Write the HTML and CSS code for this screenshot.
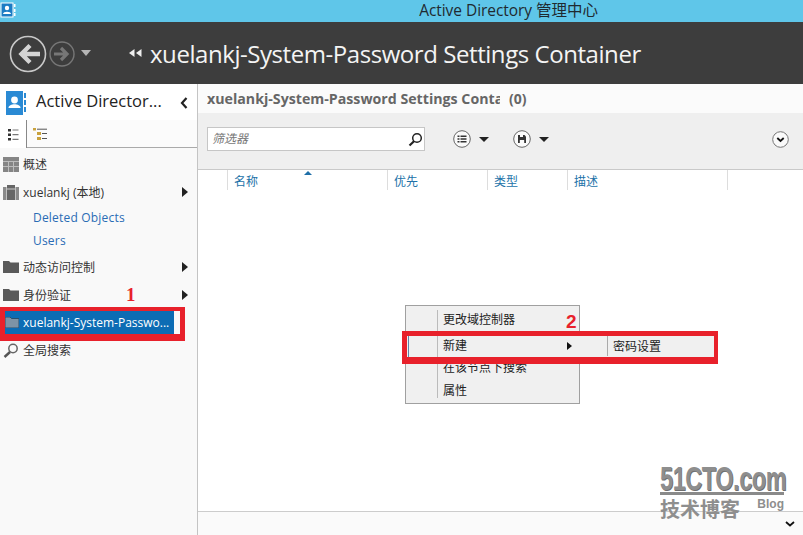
FILE: index.html
```html
<!DOCTYPE html>
<html lang="zh">
<head>
<meta charset="utf-8">
<title>Active Directory 管理中心</title>
<link rel="stylesheet" href="styles.css">
</head>
<body>
<div class="app">
  <div class="titlebar">
    <svg class="app-icon" width="16" height="16" viewBox="0 0 16 16"><rect x="1" y="1" width="12" height="14" fill="#1b7cc4" stroke="#fff"/><rect x="14" y="2" width="1.5" height="3" fill="#fff"/><rect x="14" y="7" width="1.5" height="3" fill="#fff"/><rect x="14" y="11" width="1.5" height="3" fill="#fff"/><circle cx="7" cy="6" r="2.2" fill="#fff"/><path d="M3 12c0-3 8-3 8 0z" fill="#fff"/></svg>
    <span class="title-text">Active Directory 管理中心</span>
  </div>
  <header class="navbar">
    <svg class="nav-back" width="38" height="38" viewBox="0 0 38 38"><circle cx="19" cy="19" r="17.500" fill="none" stroke="#c8c8c8" stroke-width="1.600"/><path d="M31 19H15M21 10.500L12.500 19l8.500 8.500" fill="none" stroke="#d4d4d4" stroke-width="4.400"/></svg>
    <svg class="nav-forward" width="26" height="26" viewBox="0 0 26 26"><circle cx="13" cy="13" r="12" fill="none" stroke="#777" stroke-width="1.400"/><path d="M5 13h12M12 7l6 6-6 6" fill="none" stroke="#777" stroke-width="3.200"/></svg>
    <span class="nav-caret"></span>
    <svg class="crumb" width="13" height="9" viewBox="0 0 13 9"><path d="M5.500 0v8L0 4zM12.500 0v8L7 4z" fill="#eee"/></svg>
    <span class="nav-title">xuelankj-System-Password Settings Container</span>
  </header>
  <div class="content">
    <aside class="sidebar">
      <div class="side-head">
        <svg width="20" height="24" viewBox="0 0 20 24"><rect x="0" y="0" width="17" height="24" fill="#2a8ad4"/><rect x="18" y="2" width="2" height="5" fill="#2a8ad4"/><rect x="18" y="9" width="2" height="5" fill="#2a8ad4"/><rect x="18" y="16" width="2" height="5" fill="#2a8ad4"/><circle cx="8.500" cy="9" r="3.400" fill="#fff"/><path d="M2.500 17c0-5 12-5 12 0z" fill="#fff"/></svg>
        <span class="side-title">Active Director...</span>
        <svg class="collapse" width="8" height="12" viewBox="0 0 8 12"><path d="M6.500 1L2 6l4.500 5" fill="none" stroke="#222" stroke-width="2.200"/></svg>
      </div>
      <div class="tabs">
        <div class="tab tab-on">
          <svg width="11" height="12" viewBox="0 0 11 12"><path d="M0 0h3v2.500H0zM0 4.500h3V7H0zM0 9h3v2.500H0z" fill="#333"/><path d="M4.500 1h6M4.500 5.700h6M4.500 10.300h6" stroke="#777" stroke-width="1.200"/></svg>
        </div>
        <div class="tab">
          <svg width="15" height="13" viewBox="0 0 15 13"><path d="M0 0h3v2.500H0zM4 4h4v3H4zM4 9h4v3H4z" fill="#c9a23e"/><path d="M4 1.200h10M9 5.500h5M9 10.500h5" stroke="#555" stroke-width="1"/></svg>
        </div>
      </div>
      <ul class="tree">
        <li class="node n-overview">
          <svg width="16" height="15" viewBox="0 0 16 15"><rect width="16" height="15" fill="#858585"/><path d="M0 4.500h16M5.500 4.500v10.500M10.500 4.500v10.500M0 9.500h16" stroke="#bdbdbd"/></svg>
          <span>概述</span>
        </li>
        <li class="node n-domain">
          <svg width="16" height="15" viewBox="0 0 16 15"><rect x="4" y="0" width="8" height="15" fill="#666"/><rect x="0" y="2" width="3.500" height="13" fill="#8a8a8a"/><rect x="12.500" y="2" width="3.500" height="13" fill="#8a8a8a"/><path d="M4 4h8" stroke="#ccc"/></svg>
          <span>xuelankj (本地)</span>
          <i class="arrow"></i>
        </li>
        <li class="sub s-first">Deleted Objects</li>
        <li class="sub s-second">Users</li>
        <li class="node n-dac">
          <svg width="16" height="12" viewBox="0 0 16 12"><path d="M0 0h6l1.500 1.500H16V12H0z" fill="#5a5a5a"/></svg>
          <span>动态访问控制</span>
          <i class="arrow"></i>
        </li>
        <li class="node n-auth">
          <svg width="16" height="12" viewBox="0 0 16 12"><path d="M0 0h6l1.500 1.500H16V12H0z" fill="#5a5a5a"/></svg>
          <span>身份验证</span>
          <i class="arrow"></i>
        </li>
        <li class="node n-sel">
          <svg width="14" height="11" viewBox="0 0 14 11"><path d="M0 0h5l1.500 1.500H14V11H0z" fill="#7d93a6" stroke="#2a4f6c"/></svg>
          <span class="sel-text">xuelankj-System-Passwo...</span>
        </li>
        <li class="node n-search">
          <svg width="16" height="15" viewBox="0 0 16 15"><circle cx="10" cy="5.500" r="4.200" fill="none" stroke="#666" stroke-width="1.500"/><path d="M7 9L1.500 14" stroke="#555" stroke-width="2.400"/></svg>
          <span>全局搜索</span>
        </li>
      </ul>
    </aside>
    <main class="main">
      <div class="main-head">
        <span class="main-title">xuelankj-System-Password Settings Conta</span>
        <span class="main-count">(0)</span>
      </div>
      <div class="toolbar">
        <div class="filter">
          <span class="filter-text">筛选器</span>
          <svg width="15" height="15" viewBox="0 0 15 15"><circle cx="9" cy="6" r="4.300" fill="none" stroke="#222" stroke-width="1.500"/><path d="M6 9.300L1.500 13.500" stroke="#222" stroke-width="2.200"/></svg>
        </div>
        <div class="tool t-list">
          <svg width="18" height="18" viewBox="0 0 18 18"><circle cx="9" cy="9" r="8.300" fill="#fafafa" stroke="#666"/><path d="M4.500 5.500h2v1.500h-2zM4.500 8.300h2v1.500h-2zM4.500 11h2v1.500h-2z" fill="#333"/><path d="M7.500 6.200h6M7.500 9h6M7.500 11.800h6" stroke="#333" stroke-width="1.400"/></svg>
          <i class="caret"></i>
        </div>
        <div class="tool t-save">
          <svg width="18" height="18" viewBox="0 0 18 18"><circle cx="9" cy="9" r="8.300" fill="#fafafa" stroke="#666"/><path d="M5 5h6.500L13 6.500V13H5z" fill="#333"/><path d="M7 5h3v2H7zM6.800 10h4.400v3H6.800z" fill="#fafafa"/></svg>
          <i class="caret"></i>
        </div>
        <svg class="expand" width="17" height="17" viewBox="0 0 17 17"><circle cx="8.500" cy="8.500" r="7.800" fill="#fafafa" stroke="#777"/><path d="M5.300 7l3.200 3 3.200-3" fill="none" stroke="#111" stroke-width="1.800"/></svg>
      </div>
      <div class="columns">
        <i class="sort"></i>
        <div class="col c0"></div>
        <div class="col c1">名称</div>
        <div class="col c2">优先</div>
        <div class="col c3">类型</div>
        <div class="col c4">描述</div>
      </div>
      <div class="rows"></div>
      <div class="footer">
        <svg width="10" height="6" viewBox="0 0 10 6"><path d="M1 1l4 3.500L9 1" fill="none" stroke="#111" stroke-width="1.800"/></svg>
      </div>
    </main>
  </div>

  <div class="menu">
    <div class="menu-item">更改域控制器</div>
    <div class="menu-item menu-hot">新建<i class="menu-arrow"></i></div>
    <div class="menu-item menu-search">在该节点下搜索</div>
    <div class="menu-item menu-prop">属性</div>
  </div>
  <div class="submenu"><div class="submenu-item">密码设置</div></div>
  <div class="mark mark-1"></div>
  <div class="mark mark-2"></div>
  <span class="num num-1">1</span>
  <span class="num num-2">2</span>
  <div class="watermark">
    <div class="wm-logo">51CTO.com</div>
    <div class="wm-line"></div>
    <div class="wm-bottom"><span class="wm-cn">技术博客</span><span class="wm-blog">Blog</span></div>
  </div>
</div>
</body>
</html>
```
FILE: styles.css
```css
* { box-sizing: border-box; }
html, body { margin: 0; padding: 0; }
body { font-family: "Open Sans", "Noto Sans CJK SC", sans-serif; font-size: 12px; color: #333; background: #fff; }
.app { width: 803px; height: 535px; position: relative; overflow: hidden; display: flex; flex-direction: column; }

.titlebar { height: 22px; background: #5fc6e9; display: flex; align-items: center; justify-content: center; position: relative; flex: none; }
.app-icon { position: absolute; left: 0; top: 2px; }
.title-text { font-size: 15.500px; line-height: 20px; padding-bottom: 2px; color: #1f2a30; margin-left: 214px; white-space: nowrap; letter-spacing: -0.05px; }

.navbar { height: 62px; flex: none; background: #3d3d3d; display: flex; align-items: center; padding-left: 9px; padding-top: 1px; }
.nav-back { flex: none; }
.nav-forward { flex: none; margin-left: 2px; }
.nav-caret { width: 0; height: 0; border-left: 5px solid transparent; border-right: 5px solid transparent; border-top: 6px solid #b5b5b5; margin-left: 6px; margin-bottom: 2px; }
.crumb { flex: none; margin-left: 38px; margin-bottom: 1px; }
.nav-title { font-size: 24px; color: #f4f4f4; margin-left: 8px; white-space: nowrap; letter-spacing: -0.44px; }

.content { flex: 1; display: flex; min-height: 0; }
.sidebar { width: 198px; flex: none; background: #f9f9f9; border-right: 1px solid #c4c4c4; display: flex; flex-direction: column; }
.side-head { height: 36px; background: #fff; display: flex; align-items: center; padding-left: 6px; padding-top: 1px; }
.side-title { font-size: 16.500px; line-height: 22px; padding-bottom: 3px; color: #222; margin-left: 10px; white-space: nowrap; width: 136px; }
.collapse { margin-left: 8px; }
.tabs { display: flex; height: 28px; border-bottom: 1px solid #aaa; background: #fbfbfb; }
.tab { width: 27px; height: 27px; display: flex; align-items: center; justify-content: center; padding-top: 2px; }
.tab-on { height: 28px; border-right: 1px solid #888; background: #fff; }
.tree { list-style: none; margin: 0; padding: 0; flex: 1; }
.node { display: flex; align-items: center; padding-left: 3px; height: 24px; position: relative; font-size: 12px; color: #333; white-space: nowrap; }
.node span { margin-left: 4px; }
.arrow { position: absolute; left: 182px; top: 7px; width: 0; height: 0; border-top: 5px solid transparent; border-bottom: 5px solid transparent; border-left: 6px solid #222; }
.n-overview { margin-top: 4px; }
.n-domain { margin-top: 4px; margin-bottom: 2px; }
.sub { color: #2a6cb5; padding-left: 33px; height: 23px; line-height: 23px; font-size: 12px; letter-spacing: 0.2px; }
.n-dac { margin-top: 3px; }
.n-auth { margin-top: 4px; }
.n-sel { height: 24px; margin-left: 5px; width: 169px; background: #0c6cb4; padding-left: 0; margin-top: 3px; color: #fff; }
.n-sel .sel-text { margin-left: 4px; color: #fff; }
.n-search { margin-top: 4px; }

.main { flex: 1; display: flex; flex-direction: column; min-width: 0; background: #fff; }
.main-head { height: 29px; background: #fbfbfb; display: flex; align-items: center; padding-left: 9px; font-weight: 700; font-size: 14px; color: #666; white-space: nowrap; }
.main-title { width: 293px; overflow: hidden; font-size: 14.200px; }
.main-count { margin-left: 9px; }
.toolbar { height: 57px; flex: none; background: #efefef; border-bottom: 1px solid #c9c9c9; display: flex; align-items: flex-start; padding: 14px 14px 0 9px; }
.filter { width: 218px; height: 24px; background: #fff; border: 1px solid #c6c6c6; display: flex; align-items: center; justify-content: space-between; padding: 0 1px 0 4px; }
.filter-text { font-style: italic; color: #777; font-size: 12px; padding-bottom: 2px; }
.tool { display: flex; align-items: center; height: 24px; }
.t-list { margin-left: 28px; }
.t-save { margin-left: 24px; }
.caret { width: 0; height: 0; border-left: 5px solid transparent; border-right: 5px solid transparent; border-top: 5px solid #222; margin-left: 8px; }
.expand { margin-left: auto; margin-top: 4px; }
.columns { display: flex; height: 20px; flex: none; position: relative; background: #fff; }
.col { border-right: 1px solid #ddd; color: #2272a8; font-size: 12px; padding-left: 6px; line-height: 24px; height: 20px; }
.c0 { width: 30px; }
.c1 { width: 160px; }
.c2 { width: 100px; }
.c3 { width: 80px; }
.c4 { width: 160px; }
.sort { position: absolute; left: 106px; top: 1px; border-left: 4px solid transparent; border-right: 4px solid transparent; border-bottom: 4px solid #1e6fa8; }
.rows { flex: 1; }
.footer { height: 24px; flex: none; background: #fafafa; border-top: 1px solid #ccc; display: flex; align-items: center; justify-content: flex-end; padding-right: 8px; }

.menu { position: absolute; left: 405px; top: 305px; width: 175px; height: 99px; background: #f0f0f0; border: 1px solid #a0a0a0; padding: 3px 4px 0 2px; }
.menu::before { content: ""; position: absolute; left: 31px; top: 4px; bottom: 5px; width: 1px; background: #bbb; }
.menu-item { height: 22px; line-height: 22px; padding-left: 35px; font-size: 12px; color: #222; position: relative; }
.menu-hot { height: 24px; line-height: 24px; margin-top: 3px; border-left: 1px solid #5b84ab; border-bottom: 1px solid #5b84ab; margin-right: -1px; padding-left: 34px; }
.menu-search { margin-top: -1px; }
.menu-prop { margin-top: 1px; }
.menu-arrow { position: absolute; right: 4px; top: 8px; border-top: 4px solid transparent; border-bottom: 4px solid transparent; border-left: 5px solid #111; }
.submenu { position: absolute; left: 576px; top: 335px; width: 139px; height: 26px; background: #f0f0f0; padding-left: 31px; }
.submenu-item { border-left: 1px solid #aaa; padding-left: 5px; height: 20px; line-height: 22px; margin-top: 1px; font-size: 12px; color: #222; }
.mark { position: absolute; border-style: solid; border-color: #e8212b; }
.mark-1 { left: 0; top: 307px; width: 185px; height: 34px; border-width: 4px 5px 7px 5px; }
.mark-2 { left: 402px; top: 331px; width: 316px; height: 33px; border-width: 5px 4px 7px 5px; }
.num { position: absolute; color: #e8212b; font-weight: 700; font-family: "Liberation Sans", sans-serif; font-size: 19px; line-height: 20px; }
.num-1 { left: 126px; top: 285px; font-family: "Liberation Serif", serif; }
.num-2 { left: 566px; top: 312px; }

.watermark { position: absolute; left: 660px; top: 465px; width: 128px; color: #8e8e8e; }
.wm-logo { font-family: "Liberation Sans", sans-serif; font-weight: 700; font-size: 34px; line-height: 26px; height: 27px; letter-spacing: -0.6px; white-space: nowrap; transform: scaleX(0.69); transform-origin: 0 50%; text-shadow: 1px 1px 0 #6e6e6e; }
.wm-line { height: 3px; background: #8a8a8a; margin-right: 4px; }
.wm-bottom { display: flex; justify-content: space-between; padding-right: 4px; }
.wm-cn { font-size: 20px; line-height: 28px; font-weight: 700; font-family: "Noto Sans CJK SC", sans-serif; }
.wm-blog { font-size: 12px; font-weight: 700; font-family: "Liberation Sans", sans-serif; line-height: 18px; }
```
